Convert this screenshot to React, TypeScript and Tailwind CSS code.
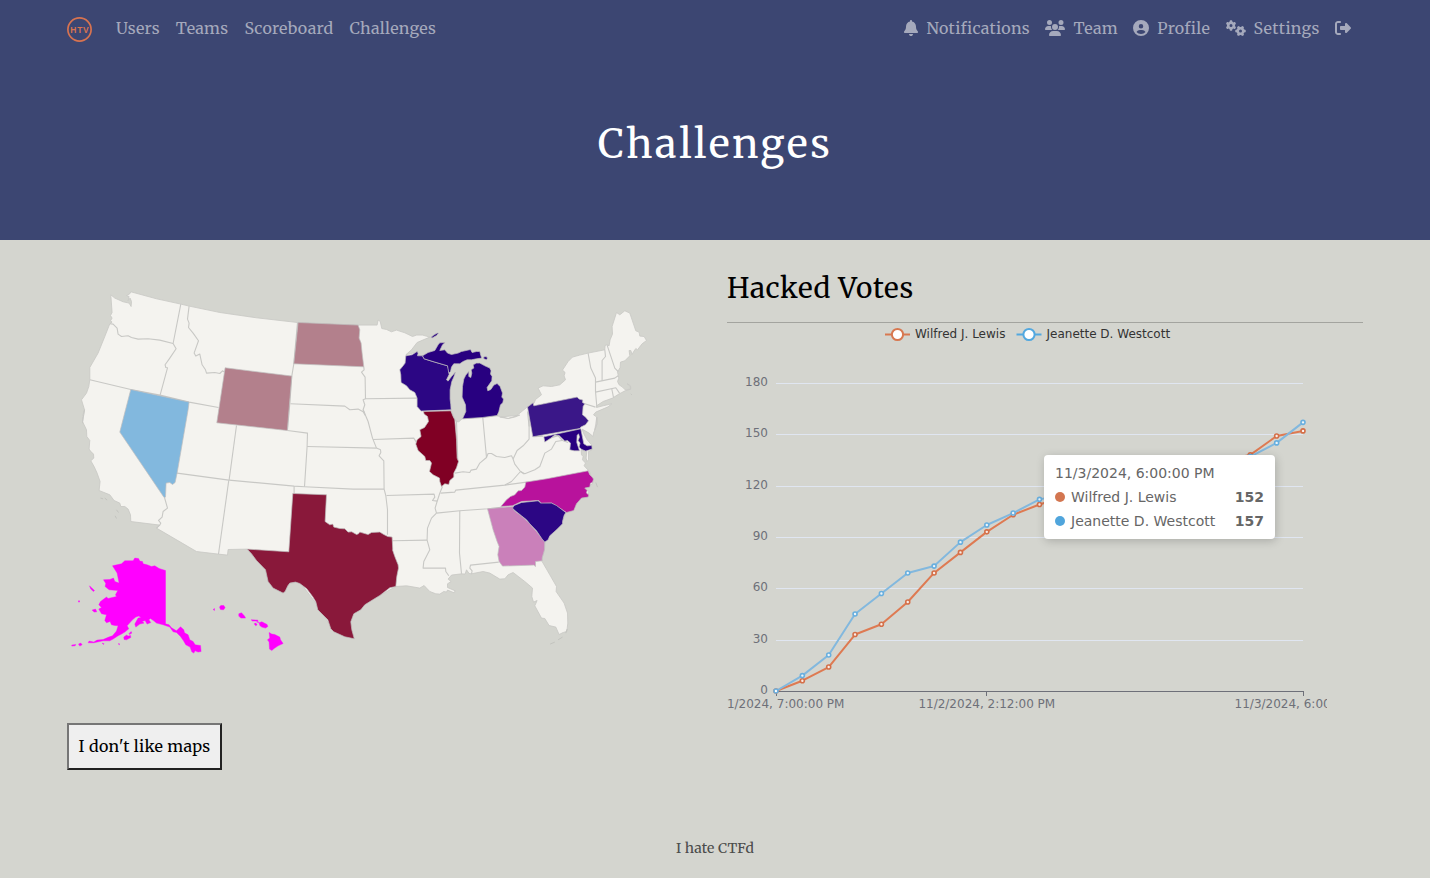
import React from "react";
import { FaBell, FaUsers, FaCircleUser, FaGears, FaRightFromBracket } from "react-icons/fa6";

// Map outlines are stored in thirds of a pixel, relative to the origin of a map tile.
const t = (ox: number, oy: number, pts: string) =>
  pts
    .split(" ")
    .map((p) => {
      const [x, y] = p.split(",").map(Number);
      return `${(ox + x / 3).toFixed(1)},${(oy + y / 3).toFixed(1)}`;
    })
    .join(" ");

const northWest = (p: string) => t(60, 280, p);
const southWest = (p: string) => t(60, 410, p);
const north = (p: string) => t(220, 280, p);
const plains = (p: string) => t(220, 410, p);
const lakes = (p: string) => t(380, 310, p);
const midwest = (p: string) => t(380, 410, p);
const newEngland = (p: string) => t(500, 300, p);
const atlantic = (p: string) => t(500, 390, p);
const gulf = (p: string) => t(380, 500, p);
const pacific = (p: string) => t(60, 540, p);

const mainland = [
  northWest("213,36 290,57 363,73 388,79 470,96"),
  north("0,98 110,114 233,128 320,133 415,136 472,136 475,121 481,124 486,146 500,149"),
  lakes("35,66 50,61 75,69 98,80 110,76 128,76 150,82 112,98 95,120 78,135 112,127 100,200 200,250 214,300 228,335 237,336 247,327 308,323 350,318 362,320 385,326 405,322 420,316"),
  newEngland("0,352 25,356 50,348 82,322 103,310 107,299 125,285 115,265 130,258 155,260 180,255 197,240 193,228 196,218 188,211 205,185 218,172 240,166 265,160 315,150 316,137 321,135 328,138 331,120 338,103 337,80 350,38 360,45 375,33 390,40 408,93 418,97 420,109 433,110 440,122 427,132 413,150 408,146 401,156 397,164 393,152 388,152 390,168 375,183 362,187 361,203 353,217 357,235 353,245 358,255 368,262 376,270 392,268 391,259 382,252 392,257 393,268 376,273 366,278 357,283 338,295 310,305 290,318 290,323 310,318 336,312 325,321 288,337 281,345 291,352 291,372 285,390"),
  atlantic("291,82 291,105 281,130 280,140 268,130 247,118 252,132 262,150 275,165 277,180 266,185 266,210 262,215 259,205 261,185 244,180 245,195 250,200 248,210 257,220 253,228 264,240 268,243 275,262 281,268 280,280 265,292 255,295 267,305 265,320 245,325 230,342 215,365 200,368"),
  gulf("558,40 548,65 548,72 530,90 510,108 495,127 494,150 487,175 487,185 510,225 530,260 529,275 553,310 563,340 564,370 561,395 550,398 538,404 528,382 508,377 495,356 485,355 465,318 472,302 461,307 456,290 458,265 435,245 400,218 385,225 375,237 360,238 330,220 310,215 275,222 268,221 260,210 256,223 245,222 215,226 205,238 214,245 203,252 203,263 226,273 223,279 203,271 200,277 192,275 180,283 168,282 150,275 140,265 133,257 120,265 80,258 48,260 0,287"),
  "365,604 352,613 350,622 353,638 333,630 318,606",
  pacific("720,127 690,130 670,160 640,145 625,125 617,90 590,62 562,28 505,29 503,46 475,43 410,35"),
  southWest("290,355 300,346 213,335 212,315 205,298 195,290 183,290 180,280 163,272 150,255 118,242 121,215 112,190 103,170 93,153 102,145 101,133 92,124 88,118 90,92 81,80 80,60 68,35 74,0"),
  northWest("68,430 68,410 74,390 65,360 80,340 87,320 90,300 90,263 115,220 135,170 150,132 157,127 152,123 157,115 152,107 157,98 153,45 165,55 190,66 208,70 214,80 215,65 211,55 205,62 208,50 200,47 210,42"),
].join(" ");

const borders = [
  northWest("150,132 160,133 172,145 175,163 185,170 205,168 215,173 235,178 265,177 300,181 340,191"),
  northWest("363,73 340,191 349,207 330,235 316,255 318,263 323,264 301,346"),
  northWest("90,300 213,329 301,346 388,367 476,383"),
  northWest("388,79 383,118 388,130 386,143 400,160 416,183 403,220 408,229 420,223 427,255 437,270 440,280 465,278 480,281 488,273 494,277"),
  southWest("314,263 323,295 310,305 307,322 296,332 303,340 300,346 290,355"),
  southWest("352,190 507,211"),
  southWest("507,211 476,433"),
  plains("50,47 28,211"),
  plains("28,211 223,229 254,231 400,238 493,238"),
  plains("203,62 263,70 262,110 254,231"),
  plains("262,110 470,115"),
  plains("223,229 223,251"),
  plains("430,0 445,35 458,85 470,115 482,120 483,128 478,138 492,153 493,238 498,257 503,300 503,375"),
  north("233,128 222,252 216,289 210,372 203,450"),
  north("432,261 433,270 425,277 436,292 437,357 430,360 435,375 430,390 435,402"),
  north("212,372 375,379 390,390 415,388 430,396 437,408"),
  north("437,357 592,355"),
  plains("460,89 582,85 590,98"),
  midwest("20,257 163,253 165,262 158,272 172,274"),
  gulf("38,123 142,121"),
  gulf("170,40 155,55 143,85 142,121 150,150 132,185 130,205 197,205 198,215 207,228"),
  midwest("188,230 180,250 172,275 166,295 170,310"),
  midwest("182,250 225,247 228,241 375,226 440,217"),
  midwest("170,310 240,303 325,297 370,292"),
  gulf("240,33 239,160 245,222"),
  gulf("357,187 272,196 270,205 277,213 275,222"),
  midwest("225,190 250,186 270,188 274,181 290,178 300,160 320,143 309,24"),
  midwest("230,32 234,155"),
  midwest("320,143 325,131 335,131 350,140 375,143 395,138 400,148 412,122 430,108 448,88 448,50 443,5"),
  midwest("400,148 405,163 422,185 395,215 375,226"),
  atlantic("62,245 75,252 105,240 120,230 135,190 155,178 168,155 187,152"),
  midwest("422,185 433,193"),
  atlantic("102,141 130,139"),
  atlantic("134,154 160,142 175,138 188,152 205,158"),
  atlantic("88,60 88,110"),
  newEngland("265,160 273,205 287,235 287,275 291,320"),
  newEngland("255,312 287,322"),
  newEngland("315,150 317,170 307,182 307,243"),
  newEngland("287,247 345,235 355,228"),
  newEngland("322,136 345,205 355,215"),
  newEngland("287,277 348,264 359,280"),
  newEngland("336,267 341,293"),
];

const states: { name: string; fill: string; points: string }[] = [
  { name: "NV", fill: "#82b8de", points: northWest("213,329 388,367") + " " + southWest("385,0 352,190 346,218 338,224 330,218 319,220 317,262 313,263 180,67 197,0") },
  { name: "WY", fill: "#b3808c", points: "225.3,368 292,376.3 287.5,430.7 217,423" },
  { name: "ND", fill: "#b3808c", points: north("235,128 415,136 420,150 418,175 424,190 427,220 432,261 222,252") },
  { name: "TX", fill: "#89183a", points: [
    plains("219,251 320,255 316,335 330,345 339,343 342,352 360,356 375,357 385,367 396,366 410,374 416,372 420,367 445,374 455,368 480,367 492,374 504,380 517,382 519,420"),
    gulf("38,150 45,170 55,195 56,205 51,230 48,260 30,264 0,287"),
    "373,600 365,605 361,610 354,614 351,622 352,630 354.500,639 345,637 334,632 331,629 328,620 318,610 316,602 313,597 307,589",
    pacific("720,131 707,127 690,130 684,138 676,155 670,160 640,145 625,125 617,90 590,62 575,42 562,28 687,36"),
  ].join(" ") },
  { name: "WI", fill: "#2c0684", points: lakes("78,138 97,135 112,125 115,130 113,138 128,138 133,147 165,157 190,164 203,168 207,180 208,194 200,210 205,214 215,200 227,187 222,202 216,215 211,240 211,268 213,285 214,300 124,304 112,290 112,265 105,248 90,240 80,228 64,218 63,195 60,180 70,168 76,160") },
  { name: "UP", fill: "#280080", points: lakes("128,138 145,128 165,122 175,105 180,99 196,98 188,105 180,122 195,120 203,130 215,134 225,132 235,130 245,125 272,119 277,128 290,125 300,125 303,137 306,145 290,147 275,150 262,150 250,155 240,162 222,162 215,172 212,185 207,190 203,168 190,164 165,157 133,147") },
  { name: "Isle Royale", fill: "#280080", points: lakes("153,83 162,76 172,70 176,70 170,77 158,84") },
  { name: "Mackinac", fill: "#280080", points: lakes("311,142 319,140 323,145 320,150 312,147") },
  { name: "MI", fill: "#280080", points: lakes("248,327 258,305 257,285 247,262 248,230 252,208 258,196 267,185 267,200 273,203 276,190 274,180 282,175 280,165 290,160 300,160 315,168 330,175 334,183 332,193 337,200 336,213 322,233 324,243 333,239 342,226 352,221 361,230 368,250 366,262 371,268 369,279 362,285 357,306 352,317 308,323") },
  { name: "IL", fill: "#800024", points: midwest("131,5 213,3 220,20 225,30 230,90 232,145 236,155 230,174 222,190 222,202 210,212 207,224 195,222 185,230 180,215 179,205 160,195 149,185 155,160 150,152 138,152 135,140 115,122 108,103 112,90 124,80 120,60 134,53 146,35 143,20 133,13") },
  { name: "PA", fill: "#3a1788", points: atlantic("83,52 100,39 102,48 232,22 238,28 249,31 248,38 255,42 250,50 248,75 257,82 266,93 257,105 243,112 240,116 99,141") },
  { name: "MD", fill: "#280080", points: atlantic("132,141 243,117 252,162 262,168 276,167 277,178 258,184 246,179 238,172 241,160 235,152 239,142 236,132 232,137 231,158 239,183 223,183 210,180 212,160 203,152 195,154 178,137 165,136 153,145 135,157") },
  { name: "NC", fill: "#b8129c", points: atlantic("78,277 140,267 265,243 270,255 277,262 281,268 278,278 272,280 270,292 255,295 262,302 260,310 267,316 265,322 245,325 230,342 222,362 200,368 155,340 125,341 117,332 65,335 38,348 3,350 20,330 32,320 45,315 55,303 65,302 75,292") },
  { name: "GA", fill: "#ca80ba", points: gulf("323,27 400,20 403,32 425,48 450,72 470,95 490,120 495,127 494,150 487,175 487,183 467,185 467,200 462,196 368,199 358,185 354,165 358,140 352,125 340,90") },
  { name: "SC", fill: "#2c0684", points: gulf("398,25 403,17 425,8 475,3 483,10 515,10 530,17 558,38 553,47 548,65 548,72 530,90 510,108 505,120 495,127 487,118 470,93 450,72 440,60 425,48 405,32") },
];

const farStates = [
  pacific("317,92 317,252 328,255 335,264 350,273 362,261 372,270 374,279 385,285 390,300 400,305 406,315 422,317 424,335 415,337 406,333 402,340 396,336 391,322 378,315 371,303 362,290 350,278 340,276 330,262 310,255 290,250 283,244 272,236 267,240 273,248 262,253 256,242 247,245 253,250 240,253 228,262 225,253 235,235 244,233 237,229 228,232 218,240 202,258 207,267 195,277 185,283 175,288 160,298 150,303 130,303 102,309 85,309 88,304 102,307 112,301 130,299 147,292 158,288 170,274 175,258 165,257 155,255 151,245 140,249 135,242 140,225 125,222 117,208 125,203 117,195 122,185 140,172 145,176 170,170 167,165 174,152 148,150 136,140 138,131 131,120 150,119 161,115 165,125 178,130 172,100 158,78 185,72 195,63 220,63 225,55 236,56 240,64 248,65 250,72 262,75 275,80 285,78 298,86"),
  pacific("192,292 200,286 205,289 212,287 213,293 200,300 193,299"),
  pacific("208,281 214,275 216,280 209,284"),
  pacific("97,211 107,208 111,216 103,217"),
  pacific("89,138 96,145 104,152 101,155 93,148"),
  pacific("36,316 48,314 46,318 36,319"),
  pacific("56,313 63,310 67,315 60,319"),
  pacific("56,183 59,183 59,187 56,187"),
  pacific("127,310 133,312 131,314"),
  pacific("175,312 179,312 179,315"),
  pacific("460,209 464,206 464,212"),
  pacific("479,202 483,197 492,197 496,204 491,210 482,209"),
  pacific("537,222 545,219 554,229 557,235 543,235 537,229"),
  pacific("574,240 594,241 594,244 578,244"),
  pacific("583,252 588,250 592,255 588,258"),
  pacific("590,246 595,245 597,249"),
  pacific("598,249 606,246 622,254 624,260 617,265 606,262 600,257"),
  pacific("628,278 636,283 645,284 660,292 662,300 670,311 655,318 643,326 636,332 629,328 628,307 623,300 630,295"),
];

const islets = [
  southWest("122,265 130,267"), southWest("135,265 142,271"), southWest("170,300 176,308"), southWest("166,318 170,326"),
  gulf("562,388 558,400"), gulf("548,412 535,420"), gulf("525,427 511,433"), newEngland("393,282 396,285"),
  atlantic("288,278 293,292"),
];

function UsMap() {
  return (
    <svg className="block h-[400px] w-[620px]" viewBox="67 272 620 400" strokeLinejoin="round">
      <g transform="translate(-0.2 -0.2)">
        <polygon points={mainland} fill="#f4f3ef" stroke="#c8c8c4" strokeWidth=".8" />
        {borders.map((p) => (
          <polyline key={p} points={p} fill="none" stroke="#c8c8c5" strokeWidth="1.1" />
        ))}
        {islets.map((p) => (
          <polyline key={p} points={p} fill="none" stroke="#c3c4bf" strokeWidth="1" />
        ))}
        {states.map((s) => (
          <polygon key={s.name} points={s.points} fill={s.fill} stroke="#c0bfbf" strokeWidth=".7" />
        ))}
        {farStates.map((p) => (
          <polygon key={p} points={p} fill="#ff00ff" stroke="#ff00ff" strokeWidth=".4" />
        ))}
      </g>
    </svg>
  );
}

const lewis = [0, 6, 14, 33, 39, 52, 69, 81, 93, 103, 109, 114, 118, 121, 125, 129, 132, 135, 138, 149, 152];
const westcott = [0, 9, 21, 45, 57, 69, 73, 87, 97, 104, 112, 115, 119, 122, 126, 130, 133, 136, 137, 145, 157];
const px = (i: number) => 49 + i * 26.35;
const py = (v: number) => 367 - v * 1.7111;

function Series({ data, line, dot }: { data: number[]; line: string; dot: string }) {
  return (
    <g>
      <polyline points={data.map((v, i) => `${px(i)},${py(v)}`).join(" ")} fill="none" stroke={line} strokeWidth="2" strokeLinejoin="bevel" />
      {data.map((v, i) => (
        <circle key={i} cx={px(i)} cy={py(v)} r="2" fill="#fff" fillOpacity=".85" stroke={dot} strokeWidth="1.6" />
      ))}
    </g>
  );
}

function Chart() {
  return (
    <svg className="block h-[400px] w-[600px] overflow-hidden font-['DejaVu_Sans',sans-serif] text-[12px]" viewBox="0 0 600 400">
      <g strokeWidth="2" fill="#fff">
        <path d="M158 10.5h25" stroke="#d87850" />
        <circle cx="170.5" cy="10.5" r="5.6" stroke="#d87850" />
        <path d="M289.500 10.500h25" stroke="#53a8df" />
        <circle cx="302" cy="10.5" r="5.6" stroke="#53a8df" />
      </g>
      <g fill="#333">
        <text x="188" y="14">Wilfred J. Lewis</text>
        <text x="319.500" y="14">Jeanette D. Westcott</text>
      </g>
      {[0, 30, 60, 90, 120, 150, 180].map((v) => (
        <g key={v}>
          {v > 0 && <path d={`M49 ${Math.round(py(v)) + 0.5}h527`} stroke="#e0e6f1" />}
          <text x="41" y={py(v) + 3} textAnchor="end" fill="#6e7079">{v}</text>
        </g>
      ))}
      <path d="M49 367.500h527M49.500 367v5M259.500 367v5M576.500 367v5" fill="none" stroke="#6e7079" />
      <g fill="#6e7079" textAnchor="middle">
        <text x="49" y="384">11/1/2024, 7:00:00 PM</text>
        <text x="259.800" y="384">11/2/2024, 2:12:00 PM</text>
        <text x="576" y="384">11/3/2024, 6:00:00 PM</text>
      </g>
      <Series data={lewis} line="#de7a52" dot="#d46f48" />
      <Series data={westcott} line="#82b8de" dot="#68afdf" />
    </svg>
  );
}

function Tooltip() {
  return (
    <div className="absolute top-[132px] left-[317px] h-[84px] w-[231px] rounded bg-white px-[11px] pt-[11px] font-['DejaVu_Sans',sans-serif] text-[14px] leading-[14px] whitespace-nowrap text-[#666] shadow-[1px_2px_10px_rgba(0,0,0,0.2)]">
      <div>11/3/2024, 6:00:00 PM</div>
      <div className="mt-[10px] flex items-center">
        <span className="mr-1.5 size-[10px] rounded-full bg-[#d37650]" />
        <span>Wilfred J. Lewis</span>
        <b className="ml-auto font-black">152</b>
      </div>
      <div className="mt-[10px] flex items-center">
        <span className="mr-1.5 size-[10px] rounded-full bg-[#50a5dc]" />
        <span>Jeanette D. Westcott</span>
        <b className="ml-auto font-black">157</b>
      </div>
    </div>
  );
}

function Logo() {
  return (
    <svg className="mt-0.5 mr-6 h-[26px] w-[25px] font-['Liberation_Sans',sans-serif] text-[8.5px] font-bold" viewBox="0 0 25 26">
      <circle cx="12.500" cy="13.500" r="11.600" fill="none" stroke="#d87350" strokeWidth="1.700" />
      <g fill="#d87350" textAnchor="middle">
        <text x="12.900" y="16.500" letterSpacing=".8">HTV</text>
      </g>
    </svg>
  );
}

export default function App() {
  return (
    <div className="flex h-[878px] w-[1430px] flex-col overflow-hidden bg-[#d4d5cf] font-['Merriweather','DejaVu_Serif',serif] text-[16px] text-black">
      <header className="h-[240px] bg-[#3c4672]">
        <nav className="flex h-[55px] items-center justify-between pr-[79px] pl-[67px] leading-[24px] tracking-[0.25px] whitespace-nowrap text-[#a5a9bc]">
          <div className="flex items-center gap-4">
            <div className="flex items-center"><Logo /><a>Users</a></div>
            <a>Teams</a>
            <a>Scoreboard</a>
            <a>Challenges</a>
          </div>
          <div className="flex items-center gap-[15.5px]">
            <a className="flex items-center"><FaBell className="mr-2 h-4 w-[14px]" />Notifications</a>
            <a className="flex items-center"><FaUsers className="mr-2 h-4 w-5" />Team</a>
            <a className="flex items-center"><FaCircleUser className="mr-2 size-4" />Profile</a>
            <a className="flex items-center"><FaGears className="mr-2 h-4 w-5" />Settings</a>
            <FaRightFromBracket className="size-4" />
          </div>
        </nav>
        <h1 className="pt-[59px] text-center text-[40px] leading-[60px] tracking-[2.4px] text-white">Challenges</h1>
      </header>
      <main className="flex h-[578px] pt-8 pl-[67px]">
        <section className="w-[660px]">
          <UsMap />
          <button className="mt-[51px] h-[47px] w-[155px] border-2 border-t-[#767676] border-r-[#222] border-b-[#222] border-l-[#767676] bg-[#efefef] pb-0.5 tracking-[0.3px] whitespace-nowrap">I don't like maps</button>
        </section>
        <section className="w-[636px]">
          <h2 className="h-[50px] text-[28px] leading-[32px] tracking-[0.65px]">Hacked Votes</h2>
          <div className="relative border-t border-[#a3a49f] pt-px">
            <Chart />
            <Tooltip />
          </div>
        </section>
      </main>
      <footer className="pt-[20px] text-center text-[14px] leading-[21px] tracking-[0.15px] text-[#4b4c4b]">I hate CTFd</footer>
    </div>
  );
}
